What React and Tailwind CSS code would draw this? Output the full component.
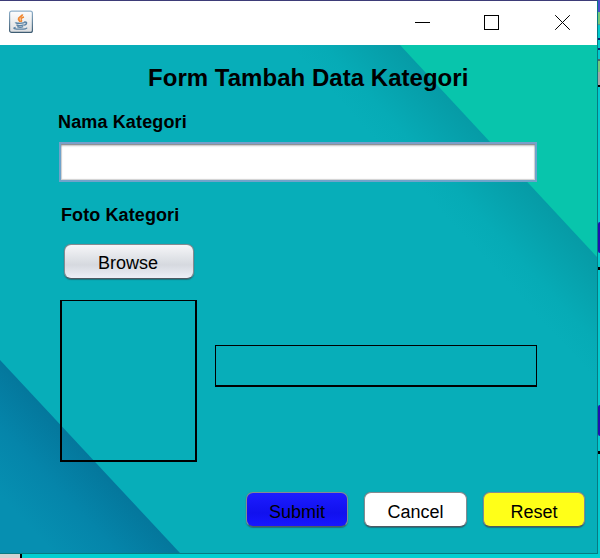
import React from "react";

function JavaIcon() {
  return (
    <svg width="24" height="24" viewBox="0 0 24 24" fill="none">
      <defs>
        <linearGradient id="tile" x1="0" y1="0" x2="0" y2="1">
          <stop offset="0" stopColor="#fdfdfd" />
          <stop offset="1" stopColor="#dcdee0" />
        </linearGradient>
        <linearGradient id="tileEdge" x1="0" y1="0" x2="0" y2="1">
          <stop offset="0" stopColor="#8fb0ca" />
          <stop offset="1" stopColor="#3f5d73" />
        </linearGradient>
      </defs>
      <rect x="0.6" y="1.1" width="22.8" height="21.3" rx="2" fill="url(#tile)" stroke="url(#tileEdge)" strokeWidth="1.2" />
      <path d="M13.4 4.4C13.6 6.4 9 7.2 9.6 9.2C9.9 10.2 10.8 10.6 11.2 12" stroke="#f0862e" strokeWidth="1.9" />
      <path d="M15 7C12.6 7.6 11.6 8.6 12.3 9.6C12.9 10.4 12.7 11.2 11.8 12" stroke="#f0862e" strokeWidth="1.5" />
      <path d="M6.4 12.4C6.2 13.4 12 13.6 15.4 12.7M7.4 14.8C9 15.6 13 15.5 14.8 14.9M8.2 16.7C9.6 17.3 12.6 17.3 14.2 16.7" stroke="#5a82a3" strokeWidth="1.3" />
      <path d="M15 12.2C18.4 11.4 18.4 14.2 15.2 15.4" stroke="#5a82a3" strokeWidth="1.5" />
      <path d="M6.6 17.3C3 18.2 5.6 19.2 11 19.2C15.6 19.2 18.6 18.6 17.4 17.7" stroke="#5a82a3" strokeWidth="1.3" />
    </svg>
  );
}

function Backdrop() {
  return (
    <svg className="absolute inset-0" width="597" height="508" viewBox="0 45 597 508" preserveAspectRatio="none">
      <defs>
        <linearGradient id="upperShade" gradientUnits="userSpaceOnUse" x1="498" y1="151" x2="437" y2="207">
          <stop offset="0" stopColor="#069ba6" />
          <stop offset="0.35" stopColor="#06a3ae" />
          <stop offset="0.7" stopColor="#06abb6" />
          <stop offset="1" stopColor="#07aeb9" />
        </linearGradient>
        <linearGradient id="lowerShade" gradientUnits="userSpaceOnUse" x1="90" y1="456" x2="22" y2="519">
          <stop offset="0" stopColor="#04779c" />
          <stop offset="0.5" stopColor="#0585aa" />
          <stop offset="1" stopColor="#068fb1" />
        </linearGradient>
      </defs>
      <rect y="45" width="597" height="508" fill="url(#upperShade)" />
      <path d="M400 45H597V257Z" fill="#08c5ac" />
      <path d="M0 360L180 553H0Z" fill="url(#lowerShade)" />
    </svg>
  );
}

function NimbusButton({ className, children }) {
  return (
    <button
      className={
        "flex h-[35px] items-center justify-center rounded-[7px] border-[1.5px] border-[#858b91] border-b-[#4d5a63] text-[18px] leading-none text-black shadow-[0_1px_1px_rgba(40,70,80,0.55),0_0_1px_rgba(110,120,125,0.8)] " +
        className
      }
    >
      {children}
    </button>
  );
}

function RightStrip() {
  return (
    <div className="flex w-[2px] flex-col bg-[#02cbd0]">
      <div className="h-[12px] bg-[#4b4dcf]" />
      <div className="h-[12px] bg-[#76c879]" />
      <div className="h-px bg-[#6d8d8d]" />
      <div className="mt-[13px] h-[2px] bg-[#08246f]" />
      <div className="mt-[8px] h-[2px] bg-[#08246f]" />
      <div className="mt-[9px] h-[2px] bg-[#486b6b]" />
      <div className="h-[11px] bg-[#76c879]" />
      <div className="h-[13px] bg-[#a5a5a5]" />
      <div className="h-[2px] bg-black" />
      <div className="mt-[135px] h-[31px] rounded-l-[2px] bg-[#2010b0]" />
      <div className="mt-[14px] h-[3px] bg-black" />
      <div className="mt-[135px] h-[31px] rounded-l-[2px] bg-[#2010b0]" />
      <div className="mt-[15px] h-[3px] bg-black" />
    </div>
  );
}

export default function App() {
  return (
    <div className="h-[558px] w-[600px] overflow-hidden bg-[#02cfd1] font-['Liberation_Sans',Arial,sans-serif] text-black">
      <div className="flex h-[554px]">
        <div className="flex w-[598px] flex-col border-t border-r border-b border-t-[#3d3b78] border-r-[#087a82] border-b-[#087a82]">
          <header className="flex h-[44px] shrink-0 items-start bg-white pl-[9px]">
            <div className="mt-[9px]">
              <JavaIcon />
            </div>
            <svg className="mt-[13px] ml-[382px]" width="156" height="17" viewBox="0 0 156 17" fill="none" stroke="#000" strokeWidth="1">
              <path d="M0 8.5H15" shapeRendering="crispEdges" />
              <rect x="69.5" y="1.5" width="14" height="14" shapeRendering="crispEdges" />
              <path d="M140.2 1.2L154.8 15.8M154.8 1.2L140.2 15.8" />
            </svg>
          </header>

          <main className="relative h-[508px] shrink-0">
            <Backdrop />
            <div className="relative flex flex-col">
              <h1 className="mt-[19px] ml-[148px] h-[28px] text-[24px] leading-[28px] font-bold tracking-[0.03px] whitespace-nowrap">
                Form Tambah Data Kategori
              </h1>
              <label className="mt-[19px] ml-[58px] h-[22px] text-[18px] leading-[22px] font-bold tracking-[0.14px] whitespace-nowrap">
                Nama Kategori
              </label>
              <div className="mt-[9px] ml-[59px] h-[40px] w-[478px] border-2 border-[#6fa3cb] border-t-[#7b9ec8] bg-white shadow-[inset_0_1px_0_#8f9295,inset_0_3px_2px_-1px_rgba(90,90,90,0.35),inset_0_0_1px_1px_rgba(140,140,140,0.4)]" />
              <label className="mt-[22px] ml-[61px] h-[22px] text-[18px] leading-[22px] font-bold tracking-[0.1px] whitespace-nowrap">
                Foto Kategori
              </label>
              <NimbusButton className="mt-[18px] ml-[64px] w-[130px] bg-linear-to-b from-[#f5f6f8] via-[#d6d9df] via-60% to-[#eceff7] pt-[3px] pr-[2px]">
                Browse
              </NimbusButton>
              <div className="mt-[21px] ml-[60px] flex h-[162px] items-start gap-[18px]">
                <div className="h-[162px] w-[137px] border-2 border-t border-black" />
                <div className="mt-[45px] h-[42px] w-[322px] border border-b-2 border-black" />
              </div>
              <div className="mt-[30px] ml-[246px] flex gap-[16px]">
                <NimbusButton className="w-[102px] bg-linear-to-b from-[#1c1cff] via-[#1111ee] via-60% to-[#1717ff] pt-[5px]">
                  Submit
                </NimbusButton>
                <NimbusButton className="w-[103px] bg-white pt-[5px]">Cancel</NimbusButton>
                <NimbusButton className="w-[102px] bg-[#ffff18] pt-[5px]">Reset</NimbusButton>
              </div>
            </div>
          </main>
        </div>
        <RightStrip />
      </div>
      <div className="flex h-[4px]">
        <div className="w-[20px] bg-[#d2d2d2]" />
        <div className="w-[2px] bg-black" />
      </div>
    </div>
  );
}
